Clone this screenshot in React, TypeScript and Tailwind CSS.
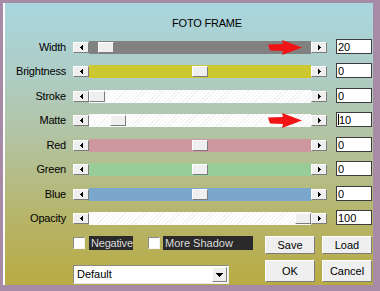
import React from "react";

const hatch =
  "bg-[repeating-linear-gradient(135deg,#ffffff_0px,#ffffff_2px,#f1f1f1_2px,#f1f1f1_3px)]";

type Row = {
  label: string;
  track: string;
  offset: number;
  value: string;
  h: string;
  arrow?: boolean;
  caret?: boolean;
};

const rows: Row[] = [
  { label: "Width", track: "bg-[#818181]", offset: 9, value: "20", h: "h-[24px]", arrow: true },
  { label: "Brightness", track: "bg-[#cdc830]", offset: 103, value: "0", h: "h-[25px]" },
  { label: "Stroke", track: hatch, offset: 0, value: "0", h: "h-[24px]" },
  { label: "Matte", track: hatch, offset: 21, value: "10", h: "h-[25px]", arrow: true, caret: true },
  { label: "Red", track: "bg-[#cc989e]", offset: 103, value: "0", h: "h-[24px]" },
  { label: "Green", track: "bg-[#98cc99]", offset: 103, value: "0", h: "h-[25px]" },
  { label: "Blue", track: "bg-[#7ca7cd]", offset: 103, value: "0", h: "h-[24px]" },
  { label: "Opacity", track: hatch, offset: 206, value: "100", h: "h-[15px]" },
];

const bevel =
  "bg-[#efefef] border border-t-white border-l-white border-r-[#7c7c7c] border-b-[#7c7c7c]";

function ArrowBtn({ dir }: { dir: "left" | "right" }) {
  return (
    <div className={`w-[16px] h-[11px] flex items-center justify-center shrink-0 ${bevel}`}>
      <svg width="3" height="5" viewBox="0 0 3 5" shapeRendering="crispEdges">
        {dir === "left" ? (
          <polygon points="3,0 0,2.5 3,5" fill="#000" />
        ) : (
          <polygon points="0,0 3,2.5 0,5" fill="#000" />
        )}
      </svg>
    </div>
  );
}

function RedArrow() {
  return (
    <svg
      className="absolute left-[179px] top-[-1px]"
      width="34"
      height="15"
      viewBox="0 0 34 15"
    >
      <polygon
        points="0,4.5 15,4 14,0 34,7.5 14,15 15,11 2,10.5"
        fill="#f01414"
      />
    </svg>
  );
}

function SliderRow({ r }: { r: Row }) {
  return (
    <div className={`${r.h} shrink-0`}>
      <div className="flex items-end h-[15px]">
        <div className="w-[61px] h-[13px] text-right whitespace-nowrap tracking-[-0.2px]">{r.label}</div>
        <div className="ml-[7px] w-[254px] h-[13px] flex items-center">
          <ArrowBtn dir="left" />
          <div className={`relative flex-1 h-[13px] flex items-center ${r.track}`}>
            <div className="shrink-0" style={{ width: r.offset }} />
            <div className={`w-[16px] h-[11px] shrink-0 ${bevel}`} />
            {r.arrow && <RedArrow />}
          </div>
          <ArrowBtn dir="right" />
        </div>
        <div className="ml-[9px] w-[36px] h-[15px] bg-white border border-[#3c3c3c] pl-[1px] leading-[12px] flex items-center">
          {r.caret && <span className="inline-block w-px h-[11px] bg-black" />}
          <span>{r.value}</span>
        </div>
      </div>
    </div>
  );
}

function Checkbox() {
  return (
    <div className="w-[12px] h-[12px] mt-[1px] bg-white border border-t-[#8a8a8a] border-l-[#8a8a8a] border-r-[#f4f4f4] border-b-[#f4f4f4] shrink-0" />
  );
}

export default function App() {
  return (
    <div className="w-[380px] h-[291px] bg-[#a68aa6] pt-[3px] pl-[3px] pr-[7px] pb-[6px] font-['Liberation_Sans',Arial,sans-serif] text-[11px] leading-[13px] text-black">
      <div className="h-full border-l-2 border-white bg-[linear-gradient(180deg,#a9d6df_0%,#aecdc6_25%,#b3c29e_50%,#b6b56c_75%,#b9ab43_100%)] flex flex-col">
        <div className="pt-[14px] pl-[167px] h-[27px] whitespace-nowrap tracking-[-0.2px]">FOTO FRAME</div>
        <div className="mt-[9px] flex flex-col">
          {rows.map((r) => (
            <SliderRow key={r.label} r={r} />
          ))}
        </div>

        <div className="mt-[11px] flex items-start h-[18px]">
          <div className="ml-[68px]">
            <Checkbox />
          </div>
          <div className="ml-[4px] w-[44px] h-[14px] bg-[#2a2a2a] text-[#dcdcdc] pl-[2px] leading-[14px] whitespace-nowrap tracking-[-0.2px]">
            Negative
          </div>
          <div className="ml-[15px]">
            <Checkbox />
          </div>
          <div className="ml-[3px] w-[90px] h-[14px] bg-[#2a2a2a] text-[#dcdcdc] pl-[2px] leading-[14px] whitespace-nowrap">
            More Shadow
          </div>
          <div className={`ml-[12px] w-[50px] h-[18px] flex items-center justify-center ${bevel}`}>Save</div>
          <div className={`ml-[7px] w-[50px] h-[18px] flex items-center justify-center ${bevel}`}>Load</div>
        </div>

        <div className="mt-[6px] flex items-start h-[22px]">
          <div className="ml-[68px] mt-[5px] w-[156px] h-[19px] bg-white border border-t-[#8a8a8a] border-l-[#8a8a8a] border-r-[#e8e8e8] border-b-[#e8e8e8] flex items-center">
            <span className="pl-[3px] flex-1">Default</span>
            <div className={`w-[15px] h-[15px] mr-[1px] flex items-center justify-center ${bevel}`}>
              <svg width="7" height="4" viewBox="0 0 7 4" shapeRendering="crispEdges">
                <polygon points="0,0 7,0 3.5,4" fill="#000" />
              </svg>
            </div>
          </div>
          <div className={`ml-[36px] w-[50px] h-[22px] flex items-center justify-center ${bevel}`}>OK</div>
          <div className={`ml-[7px] w-[50px] h-[22px] flex items-center justify-center ${bevel}`}>Cancel</div>
        </div>
      </div>
    </div>
  );
}
